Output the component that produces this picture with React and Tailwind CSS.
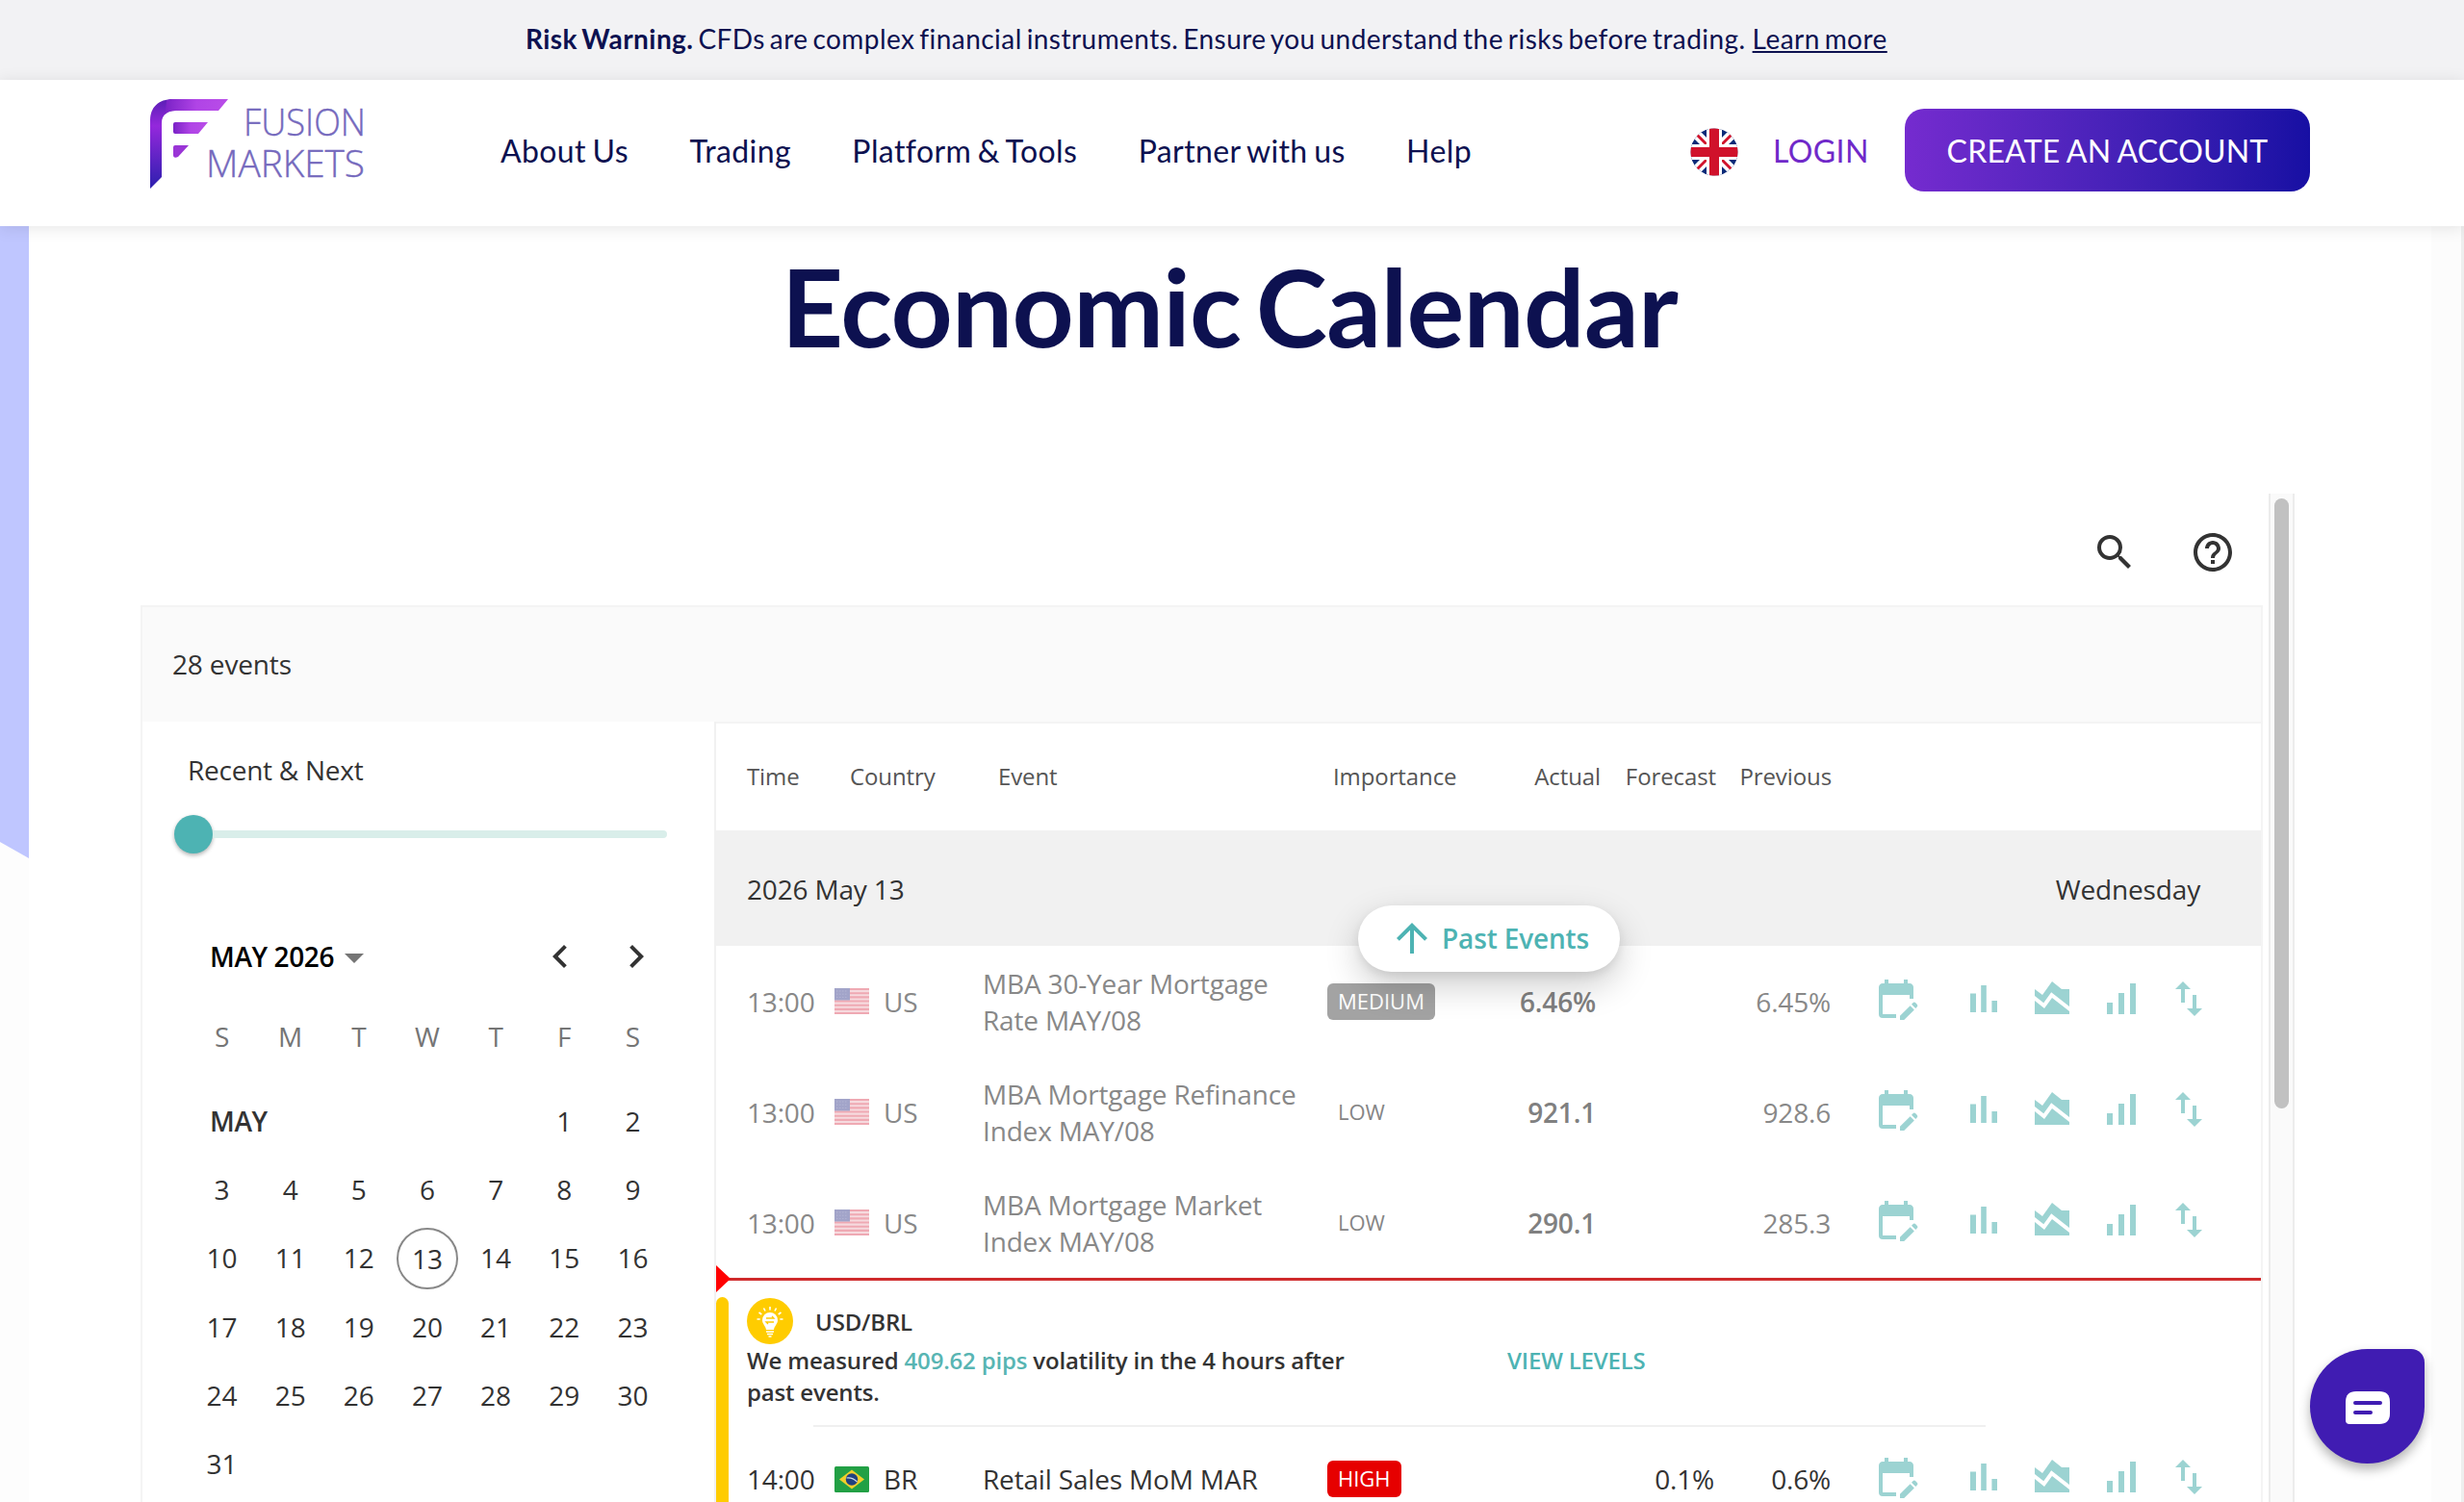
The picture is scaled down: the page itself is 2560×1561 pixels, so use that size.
import React from "react";
import {
    MdSearch,
    MdHelpOutline,
    MdChevronLeft,
    MdChevronRight,
    MdArrowUpward,
    MdEditCalendar,
    MdAreaChart,
    MdSignalCellularAlt,
    MdSwapVert,
} from "react-icons/md";

const navItems = ["About Us", "Trading", "Platform & Tools", "Partner with us", "Help"];

const weekDays = ["S", "M", "T", "W", "T", "F", "S"];

const weeks = [
    [3, 4, 5, 6, 7, 8, 9],
    [10, 11, 12, 13, 14, 15, 16],
    [17, 18, 19, 20, 21, 22, 23],
    [24, 25, 26, 27, 28, 29, 30],
    [31],
];

const pastEvents = [
    { time: "13:00", country: "US", name: "MBA 30-Year Mortgage Rate MAY/08", importance: "MEDIUM", actual: "6.46%", previous: "6.45%" },
    { time: "13:00", country: "US", name: "MBA Mortgage Refinance Index MAY/08", importance: "LOW", actual: "921.1", previous: "928.6" },
    { time: "13:00", country: "US", name: "MBA Mortgage Market Index MAY/08", importance: "LOW", actual: "290.1", previous: "285.3" },
];

const nextEvent = { time: "14:00", country: "BR", name: "Retail Sales MoM MAR", importance: "HIGH", forecast: "0.1%", previous: "0.6%" };

const badgeStyles = {
    MEDIUM: "bg-[#a3a3a3] text-white",
    LOW: "text-[#858585]",
    HIGH: "bg-[#e60000] text-white",
};

function Logo() {
    return (
        <div className="flex w-[224px] h-[94px]">
            <svg viewBox="0 0 82 94" className="w-[82px] h-[94px] shrink-0">
                <defs>
                    <linearGradient id="stem" x1="0" y1="0" x2="0" y2="1">
                        <stop offset="0" stopColor="#5a1fb5" />
                        <stop offset="0.3" stopColor="#9428dc" />
                        <stop offset="1" stopColor="#2c1fae" />
                    </linearGradient>
                    <linearGradient id="arm" x1="0" y1="0" x2="1" y2="0">
                        <stop offset="0" stopColor="#7a22c6" />
                        <stop offset="0.5" stopColor="#b044e6" />
                        <stop offset="1" stopColor="#b94de8" />
                    </linearGradient>
                </defs>
                <path d="M0 93V22C0 9 8 0 24 0l3 12c-9 0-15 4-15 13v56z" fill="url(#stem)" />
                <path d="M17 1.500C20 .3 22 0 26 0h55L71 12H26c-5 0-8 1.500-10.500 4z" fill="url(#arm)" />
                <path d="M24 26q0-2 2-2h34L50 36H26q-2 0-2-2z" fill="url(#arm)" />
                <path d="M24 50q0-2 2-2h14L29 60q-5 2-5-2z" fill="#9a35d6" />
            </svg>
            <svg viewBox="56 0 176 94" className="w-[176px] h-[94px] -ml-[26px] shrink-0 overflow-visible">
                <g fill="#7569bd" stroke="#7569bd" strokeWidth="0.4" fontFamily="'Open Sans', sans-serif" fontWeight="300" fontSize="38">
                    <text x="97" y="38" textLength="127" lengthAdjust="spacingAndGlyphs">FUSION</text>
                    <text x="58" y="81" textLength="165" lengthAdjust="spacingAndGlyphs">MARKETS</text>
                </g>
            </svg>
        </div>
    );
}

function UkFlag() {
    return (
        <svg viewBox="0 0 50 50" className="w-[50px] h-[50px] -mt-[3px]">
            <clipPath id="uk">
                <circle cx="25" cy="25" r="24.500" />
            </clipPath>
            <g clipPath="url(#uk)">
                <rect width="50" height="50" fill="#0b2a78" />
                <path d="M0 0l50 50M50 0L0 50" stroke="#fff" strokeWidth="10" />
                <path d="M0 0l50 50M50 0L0 50" stroke="#d0112b" strokeWidth="3" />
                <path d="M25 0v50M0 25h50" stroke="#fff" strokeWidth="16" />
                <path d="M25 0v50M0 25h50" stroke="#d0112b" strokeWidth="10" />
            </g>
        </svg>
    );
}

function CountryFlag({ code }) {
    if (code === "BR") {
        return (
            <svg viewBox="0 0 36 27" className="w-[36px] h-[27px] shrink-0">
                <rect width="36" height="27" rx="1.500" fill="#22a045" />
                <path d="M18 3.500L31 13.500 18 23.500 5 13.500z" fill="#f0cf2b" />
                <circle cx="18" cy="13.500" r="6.200" fill="#22417f" />
                <path d="M12.500 12q6-1 11 4" stroke="#cfd9ea" strokeWidth="1.200" fill="none" />
            </svg>
        );
    }
    return (
        <svg viewBox="0 0 36 27" className="w-[36px] h-[27px] shrink-0">
            <rect width="36" height="27" rx="1" fill="#f6dade" />
            <path
                d="M0 1h36M0 5.200h36M0 9.400h36M0 13.500h36M0 17.700h36M0 21.900h36M0 26h36"
                stroke="#efa9b3"
                strokeWidth="2.100"
            />
            <rect width="16" height="12.500" fill="#a2a4c9" />
            <path d="M2 3h12M2 6.200h12M2 9.400h12" stroke="#b3b5d4" strokeWidth="1" strokeDasharray="1.500 1.500" />
        </svg>
    );
}

function BulbIcon() {
    return (
        <svg viewBox="0 0 48 48" className="w-[48px] h-[48px]">
            <circle cx="24" cy="24" r="24" fill="#ffcc00" />
            <path d="M24 15a8 8 0 0 1 8 8c0 4-3.500 6-4 10h-8c-.5-4-4-6-4-10a8 8 0 0 1 8-8z" fill="#fff" />
            <path d="M20 35h8M21 37.500h6M22.500 40h3" stroke="#fff" strokeWidth="1.500" />
            <path
                d="M24 9v3.500M17.500 10.500l1.500 3M30.500 10.500l-1.500 3M12.500 15l2.800 2M35.500 15l-2.800 2M10.500 22h3.200M37.500 22h-3.200"
                stroke="#fff"
                strokeWidth="1.600"
            />
            <path d="M20 21h8l-2-2M28 25h-8l2 2" stroke="#ffcc00" strokeWidth="1.300" fill="none" />
        </svg>
    );
}

function BarsIcon() {
    return (
        <svg viewBox="0 0 24 24" className="w-[48px] h-[48px]" fill="currentColor">
            <path d="M5 9.200h3V19H5zM10.600 5h2.800v14h-2.800zM16.200 13H19v6h-2.800z" />
        </svg>
    );
}

function EventRow({ event, upcoming }) {
    return (
        <div
            className={`flex items-center pl-[32px] shrink-0 text-[28px] leading-[38px] tracking-[-0.17px] ${upcoming ? "h-[106px] text-[#333]" : "h-[115px] text-[#888]"}`}
        >
            <div className="w-[91px]">{event.time}</div>
            <CountryFlag code={event.country} />
            <div className="w-[118px] pl-[15px]">{event.country}</div>
            <div className="w-[358px] pr-4">{event.name}</div>
            <div className="w-[141px] flex">
                <span className={`h-[38px] px-[11px] rounded-md text-[22px] leading-[37px] tracking-normal ${badgeStyles[event.importance]}`}>
                    {event.importance}
                </span>
            </div>
            <div className="w-[138px] text-right font-semibold text-[#808080]">{event.actual}</div>
            <div className="w-[123px] text-right">{event.forecast}</div>
            <div className="w-[121px] text-right">{event.previous}</div>
            <div className="flex items-center ml-[44px] mb-[5px] text-[48px] text-[#9cd3d2]">
                <MdEditCalendar className="mr-[43px]" />
                <div className="flex gap-[23px]">
                    <BarsIcon />
                    <MdAreaChart />
                    <MdSignalCellularAlt />
                    <MdSwapVert />
                </div>
            </div>
        </div>
    );
}

function Sidebar() {
    return (
        <aside className="w-[596px] border-r-2 border-[#f1f1f1] text-[28px] text-[#333]">
            <div className="pl-[47px] pt-[31px] leading-[38px] tracking-[-0.25px]">Recent &amp; Next</div>
            <div className="ml-[33px] mt-[28px] flex items-center">
                <div className="w-[40px] h-[40px] rounded-full bg-[#4db3b3] shadow-[0_2px_4px_rgba(0,0,0,0.3)]"></div>
                <div className="w-[472px] h-[8px] rounded-r-full bg-[#d9eeea]"></div>
            </div>

            <div className="mt-[83px] h-[48px] flex items-center pl-[70px] text-black">
                <span className="font-semibold w-[140px] whitespace-nowrap tracking-[-0.4px]">MAY 2026</span>
                <svg viewBox="0 0 20 10" className="w-[20px] h-[10px] mt-[3px]">
                    <path d="M0 0h20L10 10z" fill="#757575" />
                </svg>
                <MdChevronLeft className="ml-[180px] text-[48px] text-[#333]" />
                <MdChevronRight className="ml-[31px] text-[48px] text-[#333]" />
            </div>

            <div className="ml-[47px] w-[498px] grid grid-cols-7 auto-rows-[71.2px] text-center leading-[71px]">
                {weekDays.map((d, i) => (
                    <div key={i} className="pt-6 h-[107px] text-[#757575]">{d}</div>
                ))}
            </div>
            <div className="ml-[47px] mt-[41px] w-[498px] grid grid-cols-7 auto-rows-[71.1px] text-center leading-[71px]">
                <div className="col-span-5 text-left pl-[23px] font-semibold tracking-[-0.4px]">MAY</div>
                <div>1</div>
                <div>2</div>
                {weeks.flat().map((day) => (
                    <div key={day} className="flex items-center justify-center">
                        {day === 13 ? (
                            <span className="w-[64px] h-[64px] leading-[60px] rounded-full border-2 border-[#888]">{day}</span>
                        ) : (
                            day
                        )}
                    </div>
                ))}
            </div>
        </aside>
    );
}

function EventsTable() {
    return (
        <section className="flex-1 border-t-2 border-[#f4f4f4] relative">
            <div className="h-[111px] pb-[1px] flex items-center pl-[32px] text-[24px] text-[#555] tracking-[-0.1px]">
                <div className="w-[107px]">Time</div>
                <div className="w-[154px]">Country</div>
                <div className="w-[348px]">Event</div>
                <div className="w-[141px]">Importance</div>
                <div className="w-[137px] text-right">Actual</div>
                <div className="w-[120px] text-right">Forecast</div>
                <div className="w-[120px] text-right">Previous</div>
            </div>
            <div className="h-[120px] pt-[1px] bg-[#f1f1f1] flex items-center justify-between pl-[32px] pr-[63px] text-[28px] text-[#333] tracking-[-0.17px]">
                <span>2026 May 13</span>
                <span>Wednesday</span>
            </div>

            {pastEvents.map((event) => (
                <EventRow key={event.name} event={event} />
            ))}

            {/* Current time marker */}
            <div className="relative h-[3px] bg-[#cf2a2c]">
                <div className="absolute left-0 -top-[13px] border-y-[14px] border-y-transparent border-l-[15px] border-l-[#f00]"></div>
            </div>

            <div className="flex flex-col relative">
                <div className="absolute left-0 top-[17px] w-[13px] h-[300px] rounded-t-full bg-[#ffcc00]"></div>
                <div className="h-[153px] pl-[32px] pt-[18px] text-[24px] leading-[33px] font-semibold text-[#333] tracking-[-0.18px]">
                    <div className="flex items-center gap-[23px]">
                        <BulbIcon />
                        <span>USD/BRL</span>
                    </div>
                    <div className="flex">
                        <p className="w-[640px] mr-[150px]">
                            We measured <span className="text-[#58b5b3]">409.62 pips</span> volatility in the 4 hours after past events.
                        </p>
                        <span className="text-[#4db3b3]">VIEW LEVELS</span>
                    </div>
                    <div className="ml-[69px] mt-[18px] w-[1218px] h-[2px] bg-[#f0f0f0]"></div>
                </div>
                <EventRow event={nextEvent} upcoming />
            </div>

            {/* Floating button above the list */}
            <button className="absolute left-[667px] top-[189px] w-[272px] h-[69px] pb-[2px] rounded-full bg-white flex items-center pl-[32px] gap-[7px] text-[28px] font-semibold text-[#4db3b3] tracking-[-0.15px] whitespace-nowrap shadow-[0_14px_36px_rgba(0,0,0,0.2),0_4px_10px_rgba(0,0,0,0.08)]">
                <MdArrowUpward className="text-[48px]" />
                Past Events
            </button>
        </section>
    );
}

export default function App() {
    return (
        <div className="w-[2560px] h-[1561px] overflow-hidden flex flex-col bg-white text-[#0d1150] font-['Lato',sans-serif] relative">
            <div className="h-[83px] pb-[4px] shrink-0 bg-[#f2f2f4] pl-[546px] flex items-center text-[28px] whitespace-pre tracking-[0.45px] [word-spacing:-2.7px]">
                <b>Risk Warning.</b> CFDs are complex financial instruments. Ensure you understand the risks before trading.{" "}
                <a className="underline ml-[2px]">Learn more</a>
            </div>

            <header className="h-[152px] shrink-0 relative z-10 bg-white pl-[156px] flex items-center shadow-[0_2px_16px_rgba(0,0,0,0.1)] tracking-[0.4px] [word-spacing:-2px]">
                <div className="w-[364px] -mt-[18px] tracking-normal [word-spacing:0px]">
                    <Logo />
                </div>
                <nav className="flex gap-[63.4px] w-[1236px] -mt-[4px] text-[32px] whitespace-nowrap">
                    {navItems.map((item) => (
                        <a key={item}>{item}</a>
                    ))}
                </nav>
                <UkFlag />
                <a className="ml-[36px] w-[137px] -mt-[4px] text-[32px] text-[#7029c9]">LOGIN</a>
                <button className="w-[421px] h-[86px] -mt-[6px] pt-[2px] rounded-[20px] bg-gradient-to-r from-[#752bcf] to-[#170fa3] text-white text-[32px] tracking-[0.2px] [word-spacing:-1px] whitespace-nowrap">
                    CREATE AN ACCOUNT
                </button>
            </header>

            <main className="flex-1 flex min-h-0">
                <div className="w-[30px] bg-[#fdfdfd]">
                    <svg viewBox="0 0 30 657" className="w-[30px] h-[657px]">
                        <path d="M0 0h30v657L0 640z" fill="#bfc6ff" />
                    </svg>
                </div>

                <div className="w-[2496px] pl-[116px] bg-white">
                    <h1 className="h-[278px] pt-[27px] mr-[117px] text-center text-[112px] leading-none font-bold tracking-[-0.7px] [word-spacing:-11px]">
                        Economic Calendar
                    </h1>

                    <div className="flex justify-between w-[2238px] h-[1048px] font-['Open_Sans',sans-serif]">
                        <div className="w-[2205px]">
                            <div className="h-[116px] flex justify-end items-center gap-[54px] pr-[28px] pt-[5px] text-[48px] text-[#333]">
                                <MdSearch />
                                <MdHelpOutline />
                            </div>
                            <div className="border-2 border-b-0 border-[#f4f4f4] h-[932px]">
                                <div className="h-[119px] pb-[1px] bg-[#fafafa] flex items-center pl-[31px] text-[28px] text-[#333] tracking-[-0.15px]">28 events</div>
                                <div className="flex h-[811px]">
                                    <Sidebar />
                                    <EventsTable />
                                </div>
                            </div>
                        </div>
                        <div className="w-[27px] border-x-2 border-[#ececec] bg-[#fafafa] flex justify-center pt-[5px]">
                            <div className="w-[15px] h-[634px] rounded-full bg-[#c1c1c1]"></div>
                        </div>
                    </div>
                </div>
                <div className="flex-1 bg-[#fcfcfc] border-r-[3px] border-[#eeeeee]"></div>
            </main>

            {/* Chat launcher */}
            <button className="absolute left-[2400px] top-[1402px] w-[119px] h-[119px] rounded-[60px] rounded-tr-[14px] bg-[#401cb2] flex items-center justify-center shadow-[0_6px_12px_rgba(0,0,0,0.3)]">
                <svg viewBox="0 0 46 34" className="w-[46px] h-[34px] mt-[2px]">
                    <path d="M11 0h24q11 0 11 11v12q0 11-11 11H4q-4 0-4-4V11Q0 0 11 0z" fill="#fff" />
                    <path d="M10 12h26M10 22h16" stroke="#401cb2" strokeWidth="4" strokeLinecap="round" />
                </svg>
            </button>
        </div>
    );
}
